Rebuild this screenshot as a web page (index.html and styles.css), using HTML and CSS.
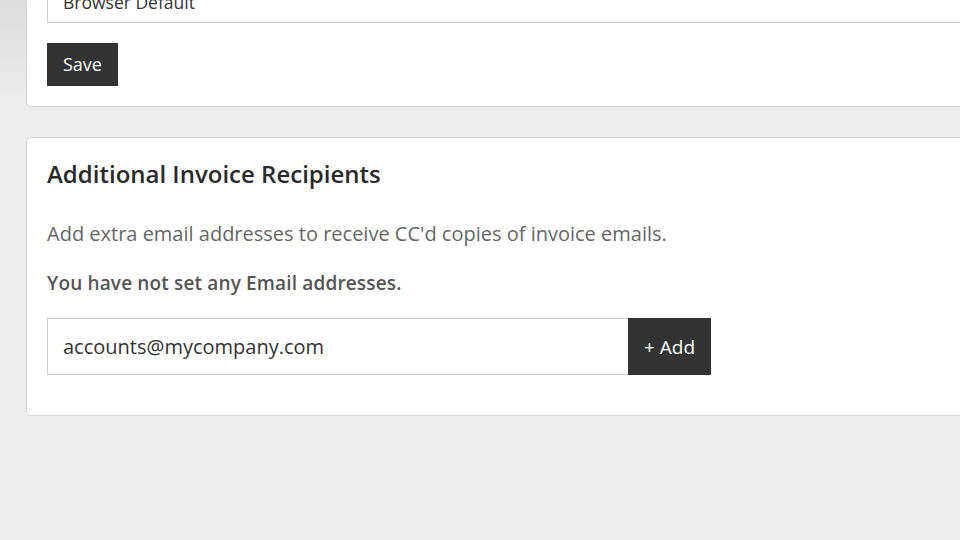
FILE: index.html
```html
<!DOCTYPE html>
<html lang="en">
<head>
<meta charset="utf-8">
<title>Settings</title>
<link rel="stylesheet" href="styles.css">
</head>
<body>
<main class="page">
  <section class="card">
    <div class="select">Browser Default</div>
    <button class="btn btn-save">Save</button>
  </section>
  <section class="card">
    <h2 class="card-title">Additional Invoice Recipients</h2>
    <p class="lead">Add extra email addresses to receive CC'd copies of invoice emails.</p>
    <p class="notice">You have not set any Email addresses.</p>
    <div class="input-group">
      <input class="email-input" type="text" value="accounts@mycompany.com">
      <button class="btn btn-add">+ Add</button>
    </div>
  </section>
</main>
</body>
</html>
```

FILE: styles.css
```css
html, body {
  margin: 0;
  padding: 0;
  height: 100%;
  overflow: hidden;
}
body {
  background: linear-gradient(to bottom, #dcdcdc 0px, #ededed 110px, #ededed 100%);
  font-family: "Open Sans", "Liberation Sans", sans-serif;
  color: #333;
}
.page {
  margin-top: -55px;
  padding-left: 26px;
  width: 1100px;
  display: flex;
  flex-direction: column;
  gap: 30px;
}
.card {
  background: #fff;
  border: 1px solid #d4d4d4;
  border-radius: 5px;
  padding: 20px;
  display: flex;
  flex-direction: column;
  align-items: flex-start;
}
.select {
  box-sizing: border-box;
  width: 1000px;
  height: 57px;
  border: 1px solid #cfcfcf;
  padding: 22px 15px 0;
  font-size: 17.5px;
  line-height: 27px;
  color: #333;
  margin-bottom: 20px;
  overflow: hidden;
}
.btn {
  border: 0;
  border-radius: 0;
  background: #333;
  color: #fff;
  font-family: "Open Sans", "Liberation Sans", sans-serif;
  cursor: pointer;
  margin: 0;
}
.btn-save {
  height: 43px;
  padding: 0 16px;
  font-size: 18px;
  line-height: 43px;
}
.card-title {
  margin: 0 0 30px;
  font-size: 24px;
  font-weight: 600;
  line-height: 32px;
  color: #2a2a2a;
}
.lead {
  margin: 0 0 23px;
  font-size: 20px;
  line-height: 27px;
  color: #666;
}
.notice {
  margin: 0 0 21px;
  font-size: 19px;
  line-height: 27px;
  font-weight: 600;
  letter-spacing: 0.15px;
  color: #555;
}
.input-group {
  display: flex;
  margin-bottom: 20px;
}
.email-input {
  box-sizing: border-box;
  width: 581px;
  height: 57px;
  border: 1px solid #cfcfcf;
  border-right: 0;
  padding: 0 15px;
  font-family: "Open Sans", "Liberation Sans", sans-serif;
  font-size: 20px;
  color: #333;
  outline: none;
}
.btn-add {
  width: 83px;
  height: 57px;
  font-size: 19px;
  font-stretch: 90%;
  padding: 0;
}
```
